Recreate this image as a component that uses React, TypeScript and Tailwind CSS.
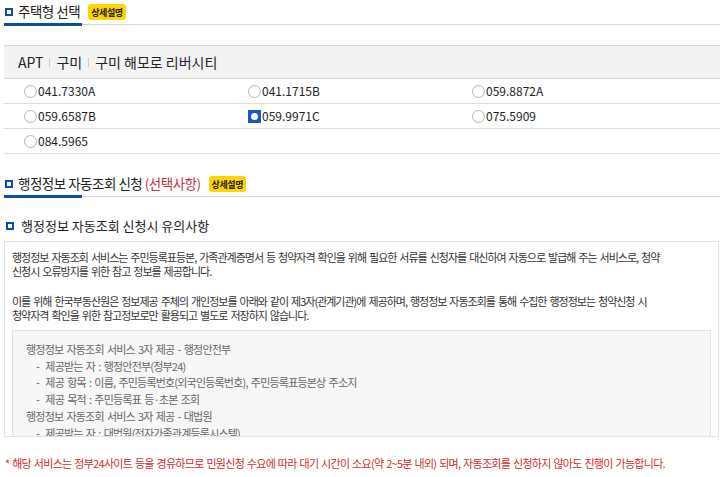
import React from "react";

const FONT = { fontFamily: "'Noto Sans CJK KR', 'Noto Sans', sans-serif" };

const TYPES = [
  ["041.7330A", "041.1715B", "059.8872A"],
  ["059.6587B", "059.9971C", "075.5909"],
  ["084.5965", "", ""],
];

function Badge() {
  return (
    <span className="inline-flex items-center h-[16px] px-[3px] rounded-[3px] bg-[#ffd400] text-[9px] font-bold text-[#222] leading-none tracking-[-0.4px]">
      상세설명
    </span>
  );
}

function SectionTitle({ children }: { children: React.ReactNode }) {
  return (
    <div>
      <div className="flex items-center gap-[5px] h-[22px] pl-[5px]">
        <span className="w-[8px] h-[8px] border-[2px] border-[#0b4ea2] shrink-0" />
        <div className="flex items-center gap-[8px] text-[13.5px] tracking-[-0.5px] text-[#222] leading-none">{children}</div>
      </div>
      <div className="flex items-center pl-[4px]">
        <div className="w-[78px] h-[3px] bg-[#0b4ea2]" />
        <div className="flex-1 h-px bg-[#d5d5d5]" />
      </div>
    </div>
  );
}

function Radio({ checked }: { checked?: boolean }) {
  if (checked) {
    return (
      <span className="w-[13px] h-[13px] bg-[#1a56c4] flex items-center justify-center shrink-0">
        <span className="w-[7px] h-[7px] rounded-full bg-white" />
      </span>
    );
  }
  return <span className="w-[13px] h-[13px] rounded-full border border-[#b5b5b5] bg-white shrink-0" />;
}

export default function App() {
  return (
    <div className="w-[720px] h-[477px] bg-white overflow-hidden text-[#222]" style={FONT}>
      {/* 주택형 선택 */}
      <div className="pt-[1px]">
        <SectionTitle>
          <span>주택형 선택</span>
          <Badge />
        </SectionTitle>
      </div>

      <div className="mt-[19px] ml-[4px] border-t border-[#d5d5d5]">
        <div className="h-[33px] bg-[#f3f3f3] border-b border-[#d5d5d5] flex items-center pl-[14px] text-[14px] gap-[6px]">
          <span>APT</span>
          <span className="w-px h-[9px] bg-[#ccc]" />
          <span>구미</span>
          <span className="w-px h-[9px] bg-[#ccc]" />
          <span>구미 해모로 리버시티</span>
        </div>
        {TYPES.map((row, i) => (
          <div key={i} className="grid grid-cols-[224px_224px_224px] h-[25px] border-b border-[#ddd] pl-[20px]">
            {row.map((t, j) => (
              <div key={j} className="flex items-center gap-[1px] text-[12px] text-[#222]">
                {t && (
                  <>
                    <Radio checked={t === "059.9971C"} />
                    <span>{t}</span>
                  </>
                )}
              </div>
            ))}
          </div>
        ))}
      </div>

      {/* 행정정보 자동조회 신청 */}
      <div className="mt-[19px]">
        <SectionTitle>
          <span>
            행정정보 자동조회 신청 <span className="text-[#c8333a]">(선택사항)</span>
          </span>
          <Badge />
        </SectionTitle>
      </div>

      <div className="mt-[17px] flex items-center gap-[7px] pl-[6px] h-[22px]">
        <span className="w-[8px] h-[8px] border-[2px] border-[#0b4ea2] shrink-0" />
        <span className="text-[13px] text-[#222]">행정정보 자동조회 신청시 유의사항</span>
      </div>

      <div className="mt-[4px] ml-[4px] mr-[1px] h-[196px] border border-[#e2e2e2] overflow-y-scroll">
        <div className="px-[7px] pt-[8px] pb-[10px] text-[11px] tracking-[-1px] [word-spacing:1.5px] leading-[14px] text-[#333] whitespace-nowrap">
          <p>
            행정정보 자동조회 서비스는 주민등록표등본, 가족관계증명서 등 청약자격 확인을 위해 필요한 서류를 신청자를 대신하여 자동으로 발급해 주는 서비스로, 청약
            <br />
            신청시 오류방지를 위한 참고 정보를 제공합니다.
          </p>
          <p className="mt-[16px]">
            이를 위해 한국부동산원은 정보제공 주체의 개인정보를 아래와 같이 제3자(관계기관)에 제공하며, 행정정보 자동조회를 통해 수집한 행정정보는 청약신청 시
            <br />
            청약자격 확인을 위한 참고정보로만 활용되고 별도로 저장하지 않습니다.
          </p>
          <div className="mt-[8px] border border-[#e2e2e2] bg-[#f7f7f7] px-[13px] py-[10px] text-[#666] text-[11px] leading-[16.7px] tracking-[-0.8px]">
            <p>행정정보 자동조회 서비스 3자 제공 - 행정안전부</p>
            <ul className="pl-[10px]">
              <li>-&nbsp; 제공받는 자 : 행정안전부(정부24)</li>
              <li>-&nbsp; 제공 항목 : 이름, 주민등록번호(외국인등록번호), 주민등록표등본상 주소지</li>
              <li>-&nbsp; 제공 목적 : 주민등록표 등·초본 조회</li>
            </ul>
            <p>행정정보 자동조회 서비스 3자 제공 - 대법원</p>
            <ul className="pl-[10px]">
              <li>-&nbsp; 제공받는 자 : 대법원(전자가족관계등록시스템)</li>
              <li>-&nbsp; 제공 항목 : 이름, 주민등록번호(외국인등록번호)</li>
              <li>-&nbsp; 제공 목적 : 가족관계증명서 등 조회</li>
            </ul>
          </div>
        </div>
      </div>

      <p className="mt-[18px] pl-[5px] text-[11px] tracking-[-0.7px] [word-spacing:1px] text-[#d42b2b] whitespace-nowrap">
        * 해당 서비스는 정부24사이트 등을 경유하므로 민원신청 수요에 따라 대기 시간이 소요(약 2~5분 내외) 되며, 자동조회를 신청하지 않아도 진행이 가능합니다.
      </p>
    </div>
  );
}
